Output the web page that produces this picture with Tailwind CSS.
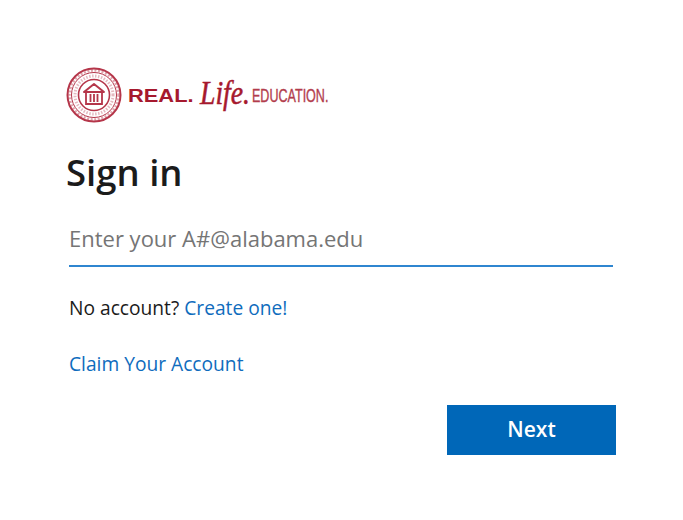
<!DOCTYPE html>
<html lang="en">

<head>
  <meta charset="UTF-8">
  <meta name="viewport" content="width=device-width, initial-scale=1.0">
  <title>Sign in</title>
  <script src="https://cdn.jsdelivr.net/npm/@tailwindcss/browser@4"></script>
</head>

<body class="bg-white font-['Open_Sans',sans-serif]">
  <div class="w-[683px] h-[520px] overflow-hidden pt-[67px] pl-[66px] pr-[67px]">
    <!-- logo -->
    <div class="flex items-center h-[56px] text-[#a6192e]">
      <svg class="w-[56px] h-[56px] shrink-0" viewBox="0 0 56 56" fill="none" stroke="#b5364a">
        <circle cx="28" cy="28" r="26.5" stroke-width="2" />
        <circle cx="28" cy="28" r="22.5" stroke-width="1" />
        <circle cx="28" cy="28" r="24.5" stroke-width="2.5" stroke-dasharray="2 1.6" opacity="0.45" />
        <circle cx="28" cy="28" r="15.5" stroke-width="1.6" />
        <circle cx="28" cy="28" r="19" stroke-width="3" stroke-dasharray="1.5 1.5" opacity="0.35" />
        <path d="M18 25 L28 17 L38 25 Z" stroke-width="2" fill="#fff" stroke-linejoin="round" />
        <path d="M20 25 V37 H36 V25 M24.5 27 V35 M28 27 V35 M31.5 27 V35" stroke-width="1.8" />
      </svg>
      <span class="ml-[6px] w-[72px] shrink-0 font-['Liberation_Sans',sans-serif] font-bold text-[19px] leading-none scale-x-[1.15] origin-left">REAL.</span>
      <span class="w-[52px] shrink-0 font-['Liberation_Serif',serif] italic text-[33px] leading-none -mt-[4px] scale-x-[0.84] origin-left [-webkit-text-stroke:0.5px_#a6192e]">Life.</span>
      <span class="shrink-0 font-['Liberation_Sans',sans-serif] text-[19px] leading-none scale-x-[0.66] origin-left [-webkit-text-stroke:0.4px_#a6192e] opacity-85">EDUCATION.</span>
    </div>

    <h1 class="mt-[24px] text-[36.5px] leading-[50px] font-semibold text-[#1b1b1b]">Sign in</h1>

    <!-- email input -->
    <div class="ml-[3px] mt-[16px] w-[544px] h-[54px] pb-[3px] border-b-2 border-[#2f86d0] flex items-center">
      <input type="text" placeholder="Enter your A#@alabama.edu" class="w-full h-full text-[22px] outline-none placeholder:text-[#757575]">
    </div>

    <p class="ml-[3px] mt-[27px] text-[19.2px] leading-[28px] text-[#1b1b1b]">No account? <a href="#" class="text-[#0f6cbd]">Create one!</a></p>
    <p class="ml-[3px] mt-[28px] text-[19.2px] leading-[28px]"><a href="#" class="text-[#0f6cbd]">Claim Your Account</a></p>

    <div class="flex justify-end mt-[27px]">
      <button class="w-[169px] h-[50px] bg-[#0067b8] text-white text-[21px] font-semibold">Next</button>
    </div>
  </div>
</body>

</html>
